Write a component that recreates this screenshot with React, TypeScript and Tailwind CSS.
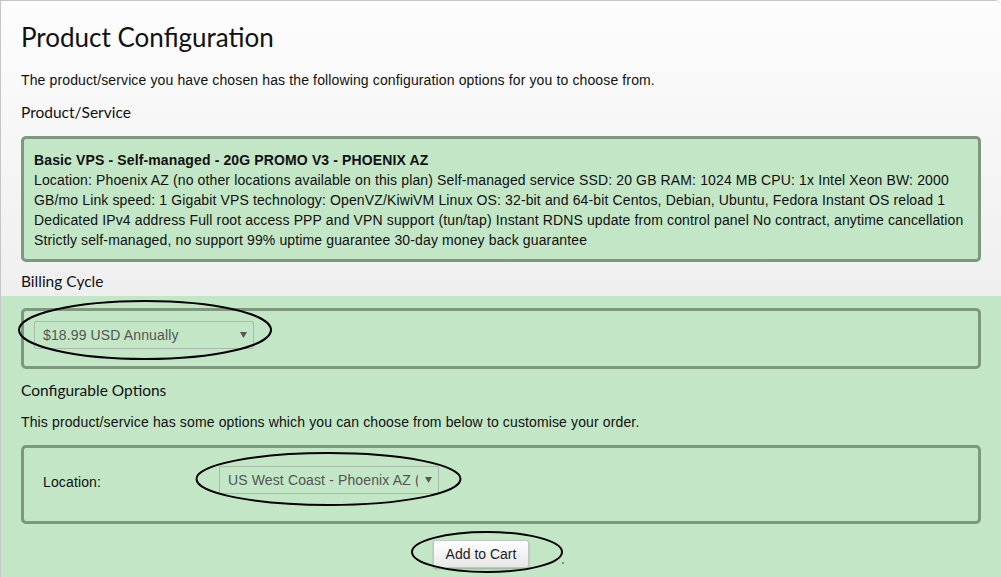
import React from "react";

const heading = { fontFamily: "Lato, 'Open Sans', sans-serif" };

function Arrow() {
  return (
    <svg width="7" height="6" viewBox="0 0 7 6" className="shrink-0">
      <path d="M0 0 L7 0 L3.5 6 Z" fill="#555" />
    </svg>
  );
}

export default function App() {
  return (
    <div
      className="relative w-[1001px] h-[577px] overflow-hidden border-t border-l border-[#c6c6c6] rounded-tr-[6px] text-[#111] tracking-[0.13px]"
      style={{ fontFamily: "'Liberation Sans', Arial, sans-serif" }}
    >
      <div className="h-[295px] bg-gradient-to-b from-[#fdfdfd] to-[#efefef] px-[20px]">
        <h1 className="pt-[19px] text-[26px] leading-[34px] font-normal tracking-normal text-[#111]" style={heading}>
          Product Configuration
        </h1>
        <p className="mt-[16px] text-[14px] leading-[20px]">
          The product/service you have chosen has the following configuration options for you to choose from.
        </p>
        <h2 className="mt-[10px] text-[15.5px] leading-[24px] tracking-normal" style={heading}>
          Product/Service
        </h2>
        <div className="mt-[12px] rounded-[5px] border-[3px] border-[#7e977f] bg-[#c2e6c6] pl-[10px] pr-[10px] pt-[11px] pb-[9px] text-[14px] leading-[20px] w-[960px]">
          <div className="font-bold">Basic VPS - Self-managed - 20G PROMO V3 - PHOENIX AZ</div>
          <div>
            Location: Phoenix AZ (no other locations available on this plan) Self-managed service SSD: 20 GB RAM: 1024 MB CPU: 1x Intel Xeon BW: 2000 GB/mo Link speed: 1 Gigabit VPS technology: OpenVZ/KiwiVM Linux OS: 32-bit and 64-bit Centos, Debian, Ubuntu, Fedora Instant OS reload 1 Dedicated IPv4 address Full root access PPP and VPN support (tun/tap) Instant RDNS update from control panel No contract, anytime cancellation Strictly self-managed, no support 99% uptime guarantee 30-day money back guarantee
          </div>
        </div>
        <h2 className="mt-[7px] text-[15.5px] leading-[24px] tracking-normal" style={heading}>
          Billing Cycle
        </h2>
      </div>
      <div className="h-[282px] bg-[#c2e6c6] px-[20px] pt-[12px]">
        <div className="w-[960px] h-[61px] rounded-[5px] border-[3px] border-[#7e977f] pl-[10px] pt-[10px]">
          <div className="flex h-[28px] w-[220px] items-center justify-between rounded-[2px] border border-[#a9b9aa] pl-[8px] pr-[6px] text-[14px] text-[#555]">
            <span>$18.99 USD Annually</span>
            <Arrow />
          </div>
        </div>
        <h2 className="mt-[9px] text-[15.5px] leading-[24px] tracking-normal" style={heading}>
          Configurable Options
        </h2>
        <p className="mt-[10px] text-[14px] leading-[20px]">
          This product/service has some options which you can choose from below to customise your order.
        </p>
        <div className="mt-[13px] w-[960px] h-[79px] rounded-[5px] border-[3px] border-[#7e977f] pt-[18px] flex">
          <div className="w-[195px] pl-[19px] pt-[6px] text-[14px] leading-[20px]">Location:</div>
          <div className="flex h-[28px] w-[220px] items-center justify-between rounded-[2px] border border-[#a9b9aa] pl-[8px] pr-[6px] text-[14px] text-[#555]">
            <span className="w-[190px] overflow-hidden whitespace-nowrap">US West Coast - Phoenix AZ (US)</span>
            <Arrow />
          </div>
        </div>
        <div className="mt-[16px] pl-[412px]">
          <button
            className="h-[28px] w-[96px] rounded-[3px] border border-[#c4c4c4] bg-gradient-to-b from-white to-[#e8e8e8] text-[14px] tracking-normal text-[#222] shadow-[0_1px_2px_rgba(0,0,0,0.25)]"
            style={{ fontFamily: "'Liberation Sans', Arial, sans-serif" }}
          >
            Add to Cart
          </button>
        </div>
      </div>
      <svg className="pointer-events-none absolute left-[-1px] top-[-1px]" width="1001" height="577">
        <ellipse cx="145" cy="330" rx="126" ry="29" fill="none" stroke="#000" strokeWidth="2" />
        <ellipse cx="328.5" cy="479" rx="132" ry="26" fill="none" stroke="#000" strokeWidth="2" />
        <ellipse cx="487" cy="552" rx="75" ry="20" fill="none" stroke="#000" strokeWidth="2" />
        <circle cx="563" cy="563" r="0.7" fill="#000" />
      </svg>
    </div>
  );
}
